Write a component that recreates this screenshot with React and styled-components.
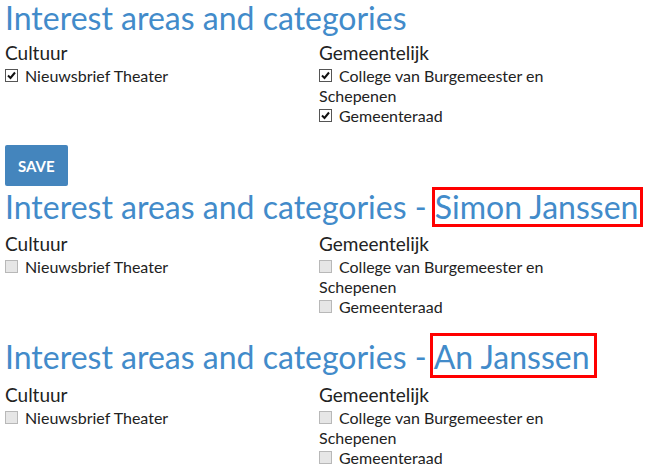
import styled, { createGlobalStyle } from "styled-components";

const GlobalStyle = createGlobalStyle`
  html, body {
    margin: 0;
    padding: 0;
    background: #fff;
  }
  body {
    font-family: Lato, "Open Sans", sans-serif;
    color: #333;
  }
`;

const categories = [
  { title: "Cultuur", items: ["Nieuwsbrief Theater"] },
  {
    title: "Gemeentelijk",
    items: ["College van Burgemeester en Schepenen", "Gemeenteraad"],
  },
];

// Checkbox drawn by hand: checked ones are white with a tick, disabled ones grey
const Check = ({ checked }) => (
  <Box $checked={checked}>
    {checked && (
      <svg width="11" height="11" viewBox="0 0 11 11">
        <polyline
          points="2,5.5 4.5,8 9,2.5"
          fill="none"
          stroke="#111"
          strokeWidth="2"
        />
      </svg>
    )}
  </Box>
);

const InterestBlock = ({ name, box, checked, top, gap }) => (
  <Section $top={top}>
    <Title>
      Interest areas and categories
      {name && (
        <>
          {" - "}
          <Name $box={box}>{name}</Name>
        </>
      )}
    </Title>
    <Columns $gap={gap}>
      {categories.map((cat) => (
        <Category key={cat.title}>
          <CatTitle>{cat.title}</CatTitle>
          <Items>
            {cat.items.map((item) => (
              <Item key={item}>
                <Check checked={checked} />
                {item}
              </Item>
            ))}
          </Items>
        </Category>
      ))}
    </Columns>
  </Section>
);

export default function App() {
  return (
    <>
      <GlobalStyle />
      <Page>
        <InterestBlock checked top={0} gap={8} />
        <SaveButton>Save</SaveButton>
        <InterestBlock
          name="Simon Janssen"
          box={{ t: 0, r: -5, b: -1, l: -3 }}
          top={3}
          gap={10}
        />
        <InterestBlock
          name="An Janssen"
          box={{ t: -4, r: -7, b: -2, l: -4 }}
          top={22}
          gap={11}
        />
      </Page>
    </>
  );
}

const Page = styled.div`
  padding: 0 5px;
`;

const Section = styled.section`
  margin-top: ${(p) => p.$top}px;
`;

const Title = styled.h1`
  margin: 0;
  font-family: Lato, sans-serif;
  font-weight: 400;
  font-size: 32px;
  line-height: 35px;
  color: #428bca;
  white-space: nowrap;
`;

const Name = styled.span`
  position: relative;

  &::after {
    content: "";
    position: absolute;
    top: ${(p) => p.$box.t}px;
    right: ${(p) => p.$box.r}px;
    bottom: ${(p) => p.$box.b}px;
    left: ${(p) => p.$box.l}px;
    border: 3px solid #f00;
    pointer-events: none;
  }
`;

const Columns = styled.div`
  display: grid;
  grid-template-columns: 314px 290px;
  margin-top: ${(p) => p.$gap}px;
`;

const Category = styled.div``;

const CatTitle = styled.h4`
  margin: 0;
  font-size: 19px;
  font-weight: 400;
  line-height: 20px;
  color: #222;
`;

const Items = styled.div`
  margin-top: 3px;
`;

const Item = styled.div`
  font-size: 16px;
  line-height: 20px;
  color: #222;
`;

const Box = styled.span`
  display: inline-block;
  box-sizing: border-box;
  width: 13px;
  height: 13px;
  margin-right: 7px;
  border: 1px solid ${(p) => (p.$checked ? "#555" : "#b8b8b8")};
  background: ${(p) => (p.$checked ? "#fff" : "#e6e6e6")};
  position: relative;

  svg {
    position: absolute;
    top: 0;
    left: 0;
  }
`;

const SaveButton = styled.button`
  display: block;
  margin-top: 19px;
  height: 41px;
  padding: 0 13px;
  border: none;
  border-radius: 2px;
  background: #4485bd;
  color: #fff;
  font-family: Lato, sans-serif;
  font-weight: 700;
  font-size: 15px;
  text-transform: uppercase;
  cursor: pointer;
`;
